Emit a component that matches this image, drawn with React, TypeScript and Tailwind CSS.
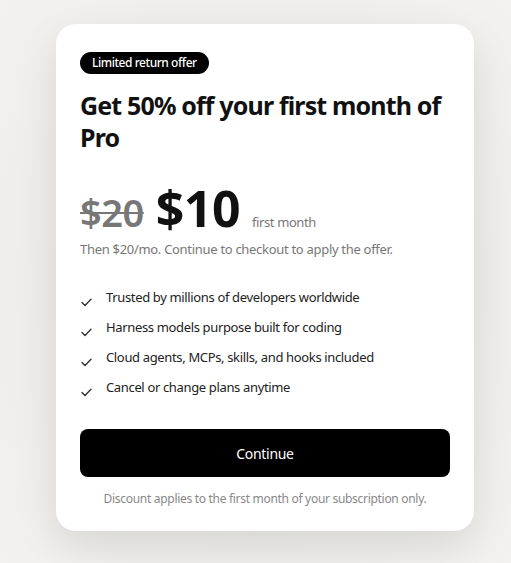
const perks = [
  "Trusted by millions of developers worldwide",
  "Harness models purpose built for coding",
  "Cloud agents, MCPs, skills, and hooks included",
  "Cancel or change plans anytime",
];

const Tick = () => (
  <svg width="11" height="9" viewBox="0 0 11 9" className="mt-2 shrink-0" fill="none">
    <path d="M1 4.6 L4 7.6 L10 1.2" stroke="#333" strokeWidth="1.4" strokeLinecap="round" strokeLinejoin="round" />
  </svg>
);

const PerkRow = ({ text }: { text: string }) => (
  <li className="flex items-center gap-[14px] h-5 pl-px">
    <Tick />
    <span className="text-[13px] text-[#222] tracking-[-0.35px]">{text}</span>
  </li>
);

export default function App() {
  return (
    <div
      className="min-h-[563px] w-full pt-6 pl-[56px] bg-[radial-gradient(ellipse_at_center,#e6e5e0_0%,#efeeea_70%,#f3f2ee_100%)]"
      style={{ fontFamily: '"Noto Sans", "Open Sans", sans-serif' }}
    >
      <div className="w-[418px] bg-white rounded-[20px] pt-[25px] px-6 pb-6 shadow-[0_16px_40px_rgba(0,0,0,0.10)]">
        <span className="inline-flex items-center h-[22px] px-3 rounded-full bg-black text-white text-[12px] font-medium tracking-[-0.45px]">
          Limited return offer
        </span>

        <h1 className="mt-[15px] text-[25px] leading-[32px] font-bold text-[#111] tracking-[-0.85px]">
          Get 50% off your first month of Pro
        </h1>

        <div className="mt-[30px] flex items-baseline gap-3 leading-none">
          <span className="text-[38px] font-semibold text-[#777] line-through decoration-2 tracking-[-0.5px]">
            $20
          </span>
          <span className="text-[50px] font-bold text-[#111] tracking-[-0.5px]">$10</span>
          <span className="text-[13px] text-[#777] tracking-[-0.4px]">first month</span>
        </div>

        <p className="mt-1.5 text-[13px] leading-5 text-[#777] tracking-[-0.3px]">
          Then $20/mo. Continue to checkout to apply the offer.
        </p>

        <ul className="mt-[29px] flex flex-col gap-[10px]">
          {perks.map((p) => (
            <PerkRow key={p} text={p} />
          ))}
        </ul>

        <button className="mt-[31px] w-full h-12 rounded-lg bg-black text-white text-[14px] tracking-[-0.3px]">
          Continue
        </button>

        <p className="mt-[14px] text-center text-[12px] leading-4 text-[#888] tracking-[-0.3px]">
          Discount applies to the first month of your subscription only.
        </p>
      </div>
    </div>
  );
}
